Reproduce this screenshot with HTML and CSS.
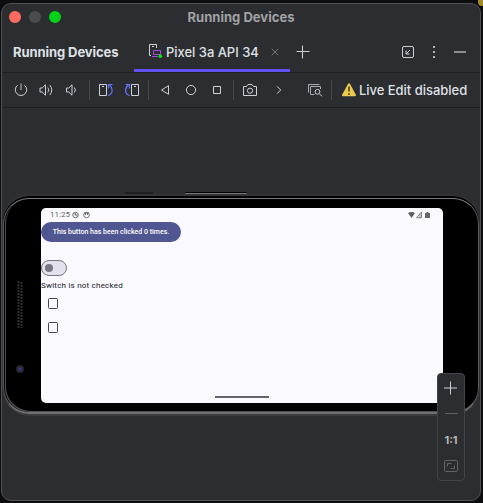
FILE: index.html
```html
<!DOCTYPE html>
<html lang="en">
<head>
<meta charset="utf-8">
<title>Running Devices</title>
<link rel="stylesheet" href="styles.css">
</head>
<body>
<div class="backdrop-spot"></div>
<main class="window">
  <header class="titlebar">
    <div class="lights"><i class="light close"></i><i class="light minimize"></i><i class="light expand"></i></div>
    <h1 class="title">Running Devices</h1>
  </header>
  <nav class="tabs">
    <strong class="tool-name">Running Devices</strong>
    <div class="tab">
      <svg class="icon" width="16" height="16" viewBox="0 0 16 16"><path d="M4 12.5H2.5v-11h7V5M5 3.5h2" stroke="#ced0d6"/><path d="M6.5 7.5h7v4h-7zM5 13.5h6" stroke="#a44be0"/><circle cx="13.3" cy="13.3" r="1.8" fill="#00f000"/></svg>
      <span class="tab-label">Pixel 3a API 34</span>
      <svg class="icon tab-close" width="8" height="8" viewBox="0 0 8 8"><path d="M.7.7l6.6 6.6M7.3.7L.7 7.3" stroke="#74767b"/></svg>
    </div>
    <svg class="icon add" width="14" height="14" viewBox="0 0 14 14"><path d="M6.5 .5v13M.5 6.5h13" stroke="#ced0d6" stroke-width="1.1"/></svg>
    <div class="tab-actions">
      <svg class="icon" width="14" height="14" viewBox="0 0 14 14"><rect x="1.5" y="1.5" width="11" height="11" rx="1.5" stroke="#ced0d6"/><path d="M9 5L5 9M5 5.5V9h3.5" stroke="#ced0d6"/></svg>
      <svg class="icon" width="4" height="14" viewBox="0 0 4 14"><path d="M1 1h2v2H1zM1 6h2v2H1zM1 11h2v2H1z" fill="#b4b6bb"/></svg>
      <svg class="icon" width="14" height="14" viewBox="0 0 14 14"><path d="M1 7h12" stroke="#8b8d91" stroke-width="2"/></svg>
    </div>
  </nav>
  <div class="toolbar">
    <svg class="icon" width="16" height="16" viewBox="0 0 16 16"><path d="M4.6 3.2a5.7 5.7 0 1 0 6.8 0" stroke="#ced0d6"/><path d="M8 1.5V8" stroke="#929499" stroke-width="1.4"/></svg>
    <svg class="icon" width="16" height="16" viewBox="0 0 16 16"><path d="M2 6h2.2l3.3-3.2v10.4L4.2 10H2zM9.8 5.5q2 2.5 0 5M11.8 3q4 5 0 10" stroke="#ced0d6"/></svg>
    <svg class="icon" width="16" height="16" viewBox="0 0 16 16"><path d="M3.5 6h2.2l3.3-3.2v10.4L5.7 10H3.5zM11.3 5.5q2.3 2.5 0 5" stroke="#ced0d6"/></svg>
    <i class="divider"></i>
    <svg class="icon" width="16" height="16" viewBox="0 0 16 16"><path d="M2.5 2.5h7v11h-7zM5 4.5h2" stroke="#ced0d6"/><path d="M11 13.5c5-1.5 5.3-7 1.5-10.5M11.5 6.5V2.5H15.5" stroke="#6675ff" stroke-width="1.2"/></svg>
    <svg class="icon" width="16" height="16" viewBox="0 0 16 16"><path d="M7.5 2.5h7v11h-7zM10 4.5h2" stroke="#ced0d6"/><path d="M5.5 13.5C.5 12 .5 6.5 4.3 3M5.5 6.5V2.5H1.5" stroke="#6675ff" stroke-width="1.2"/></svg>
    <i class="divider"></i>
    <svg class="icon" width="16" height="16" viewBox="0 0 16 16"><path d="M11.5 3.7v8.6L4.5 8z" stroke="#ced0d6"/></svg>
    <svg class="icon" width="16" height="16" viewBox="0 0 16 16"><circle cx="8" cy="8" r="4.6" stroke="#ced0d6"/></svg>
    <svg class="icon" width="16" height="16" viewBox="0 0 16 16"><path d="M4.5 4.5h7v7h-7z" stroke="#ced0d6"/></svg>
    <i class="divider"></i>
    <svg class="icon" width="16" height="16" viewBox="0 0 16 16"><path d="M1.5 4.5h3l1.5-2h4l1.5 2h3v9h-13z" stroke="#ced0d6" stroke-linejoin="round"/><circle cx="8" cy="8.7" r="2.6" stroke="#ced0d6"/></svg>
    <svg class="icon" width="16" height="16" viewBox="0 0 16 16"><path d="M6 4.3L9.7 8 6 11.7" stroke="#ced0d6"/></svg>
    <svg class="icon screens" width="16" height="16" viewBox="0 0 16 16"><path d="M1.5 10.5v-8h11M7.5 12.5h-4v-8h10V7" stroke="#a9abb0"/><circle cx="10.5" cy="9.8" r="2.4" stroke="#ced0d6"/><path d="M12.4 11.7l2.6 2.6" stroke="#ced0d6"/></svg>
    <i class="divider"></i>
    <svg class="icon" width="16" height="16" viewBox="0 0 16 16"><path d="M8 2.2L14 13.2H2z" fill="#eccb50" stroke="#eccb50" stroke-width="2" stroke-linejoin="round"/><path d="M8 4.6v5M8 11.2v1.8" stroke="#514719" stroke-width="1.7"/></svg>
    <span class="live-edit">Live Edit disabled</span>
  </div>
  <section class="canvas">
    <i class="side-button short"></i><i class="side-button long"></i>
    <div class="phone">
      <div class="bezel">
        <div class="sensors">
          <svg width="6" height="48" viewBox="0 0 6 48"><path d="M1.5 0v48M4.5 1v46" stroke="#2e2e2e" stroke-width="2" stroke-dasharray="2 1"/></svg>
          <i class="lens"></i>
        </div>
        <div class="screen">
          <div class="status">
            <span class="clock">11:25</span>
            <svg class="icon" width="7" height="8" viewBox="0 0 7 8"><circle cx="3.5" cy="4" r="2.8" stroke="#666" stroke-width=".9"/><path d="M1.5 2l3.8 3.8M3.5 2v2h2" stroke="#666" stroke-width=".8"/></svg>
            <svg class="icon face" width="7" height="8" viewBox="0 0 7 8"><circle cx="3.5" cy="4" r="2.8" stroke="#666" stroke-width=".9"/><path d="M1 2h5M2.5 2v2M4.5 2v2" stroke="#666" stroke-width=".9"/></svg>
            <svg class="icon signals" width="23" height="8" viewBox="0 0 23 8"><path d="M0 2q3.5-2 7 0L3.5 7z" fill="#5e5e60"/><path d="M8.5 6.8L13.5 1v5.8zM12 3v4" stroke="#777" stroke-width=".9"/><path d="M17 2h1.5V1h2v1H22v5h-5z" fill="#666"/></svg>
          </div>
          <div class="app-button">This button has been clicked 0 times.</div>
          <div class="switch"><i class="thumb"></i></div>
          <div class="switch-label">Switch is not checked</div>
          <i class="checkbox"></i>
          <i class="checkbox"></i>
          <i class="home-bar"></i>
        </div>
      </div>
    </div>
    <aside class="zoom-panel">
      <svg class="icon" width="14" height="14" viewBox="0 0 14 14"><path d="M6.5 .5v13M0 7h13" stroke="#ced0d6"/></svg>
      <i class="zoom-out"></i>
      <b class="actual">1:1</b>
      <svg class="icon" width="14" height="12" viewBox="0 0 14 12"><rect x=".5" y=".5" width="13" height="11" rx="1" stroke="#626368"/><path d="M3.5 6.5v-3h4M10.5 5.5v3h-4" stroke="#626368"/></svg>
    </aside>
  </section>
</main>
</body>
</html>
```
FILE: styles.css
```css
* { box-sizing: border-box; }
body {
  margin: 0;
  width: 483px;
  height: 503px;
  padding: 3px 2px 2px 1px;
  overflow: hidden;
  background: #0d0d0f;
  font-family: Inter, sans-serif;
  color: #dfe1e5;
}
.backdrop-spot {
  position: absolute;
  top: 0;
  right: 0;
  width: 5px;
  height: 6px;
  background: #a28a2c;
  border-radius: 0 0 0 4px;
}
.window {
  position: relative;
  height: 498px;
  border: 1px solid #505154;
  border-radius: 10px;
  background: #2b2d30;
  overflow: hidden;
  display: flex;
  flex-direction: column;
}
.icon { display: block; fill: none; flex: none; }
.titlebar {
  height: 26px;
  display: grid;
  grid-template-columns: 64px 1fr 64px;
  align-items: center;
}
.lights { display: flex; gap: 8px; padding-left: 7px; }
.light { width: 12px; height: 12px; border-radius: 50%; flex: none; }
.close { background: #ff6b5e; }
.minimize { background: #4b4c4e; }
.expand { background: #00d018; }
.title {
  margin: 0;
  text-align: center;
  font-size: 13px;
  line-height: 20px;
  font-weight: 700;
  color: #a1a2a4;
  letter-spacing: .02px;
}
.tabs {
  height: 43px;
  display: flex;
  align-items: stretch;
  border-bottom: 1px solid #1e1f22;
  padding-left: 11px;
}
.tool-name {
  width: 121px;
  font-size: 13px;
  line-height: 45px;
  letter-spacing: -.08px;
}
.tab {
  width: 156px;
  display: flex;
  align-items: center;
  padding: 3px 0 0 13px;
  border-bottom: 3px solid #6052f2;
  border-radius: 0 0 1px 1px;
}
.tab-label {
  width: 108px;
  padding: 2px 0 0 3px;
  font-size: 13px;
  font-weight: 500;
  letter-spacing: -.03px;
  white-space: nowrap;
}
.tab-close { margin-top: 2px; }
.add { margin: 15px 0 0 6px; }
.tab-actions {
  margin: 15px 13px 0 auto;
  display: flex;
  gap: 17px;
  height: 14px;
}
.toolbar {
  height: 35px;
  border-bottom: 1px solid #1e1f22;
  display: grid;
  grid-template-columns: 26px 24px 26px 10px 22px 32px 0 34px 18px 33px 0 34px 24px 40px 0 36px 112px;
  padding-left: 6px;
  align-items: center;
  justify-items: center;
}
.divider { width: 1px; height: 20px; background: #45474b; }
.screens { margin-left: 8px; }
.live-edit {
  justify-self: start;
  margin-left: -8px;
  font-size: 13px;
  font-weight: 500;
  letter-spacing: -.03px;
  white-space: nowrap;
}
.canvas { flex: 1; position: relative; padding-top: 86px; }
.phone {
  height: 222px;
  border: 1px solid #333234;
  border-top: 2px solid #343233;
  border-bottom: 2px solid #3d3b3e;
  border-radius: 28px;
  background: #000;
  padding-top: 2px;
}
.bezel {
  height: 216px;
  border: 1px solid #59595d;
  border-top-color: #77777d;
  border-bottom: 2px solid #706f75;
  border-radius: 26px;
  padding: 9px 35px 0 13px;
  display: grid;
  grid-template-columns: 24px 402px;
  box-shadow: inset 1px 0 #000, inset 2px -1px #525256;
}
.side-button { position: absolute; top: 84px; height: 2px; }
.short { left: 123px; width: 28px; background: #202022; }
.long { left: 183px; width: 62px; border-top: 1px solid #000; background: #747579; }
.sensors { padding-top: 73px; }
.sensors svg { display: block; }
.lens {
  display: block;
  width: 8px;
  height: 8px;
  margin: 36px 0 0 -1px;
  border: 2px solid #25252b;
  border-radius: 50%;
  background: #36367a;
}
.screen {
  width: 402px;
  height: 195px;
  border-radius: 5px;
  background: #faf9ff;
  color: #17171c;
  font-family: Roboto, sans-serif;
  font-size: 8px;
  overflow: hidden;
}
.status { display: flex; align-items: center; height: 14px; padding: 0 12px 0 9px; color: #666; }
.clock { width: 22px; font-size: 8px; line-height: 12px; }
.face { margin-left: 4px; }
.signals { margin-left: auto; }
.app-button {
  width: 140px;
  height: 20px;
  border-radius: 10px;
  background: #505692;
  color: #fff;
  text-align: center;
  font-size: 7px;
  line-height: 20px;
  font-weight: 500;
  white-space: nowrap;
}
.switch {
  width: 26px;
  height: 16px;
  margin-top: 18px;
  padding: 3px;
  border: 1px solid #777680;
  border-radius: 8px;
  background: #e3e1ec;
}
.thumb { display: block; width: 8px; height: 8px; border-radius: 50%; background: #777680; }
.switch-label { height: 22px; padding-top: 4px; line-height: 12px; letter-spacing: .22px; white-space: nowrap; }
.checkbox { display: block; width: 10px; height: 11px; margin: 0 0 13px 7px; border: 1px solid #45464f; border-radius: 1.5px; }
.home-bar { display: block; width: 54px; height: 2px; margin: 63px 0 0 174px; background: #66666a; }
.zoom-panel {
  position: absolute;
  left: 435px;
  top: 265px;
  width: 28px;
  height: 108px;
  border: 1px solid #414346;
  border-radius: 4px;
  background: #2b2d30;
  display: flex;
  flex-direction: column;
  align-items: center;
  padding-top: 7px;
}
.zoom-out { width: 13px; height: 1px; margin-top: 18px; background: #5f6165; }
.actual { margin-top: 19px; font-size: 11px; line-height: 15px; color: #b5b7bb; }
.actual + .icon { margin-top: 12px; }
```
